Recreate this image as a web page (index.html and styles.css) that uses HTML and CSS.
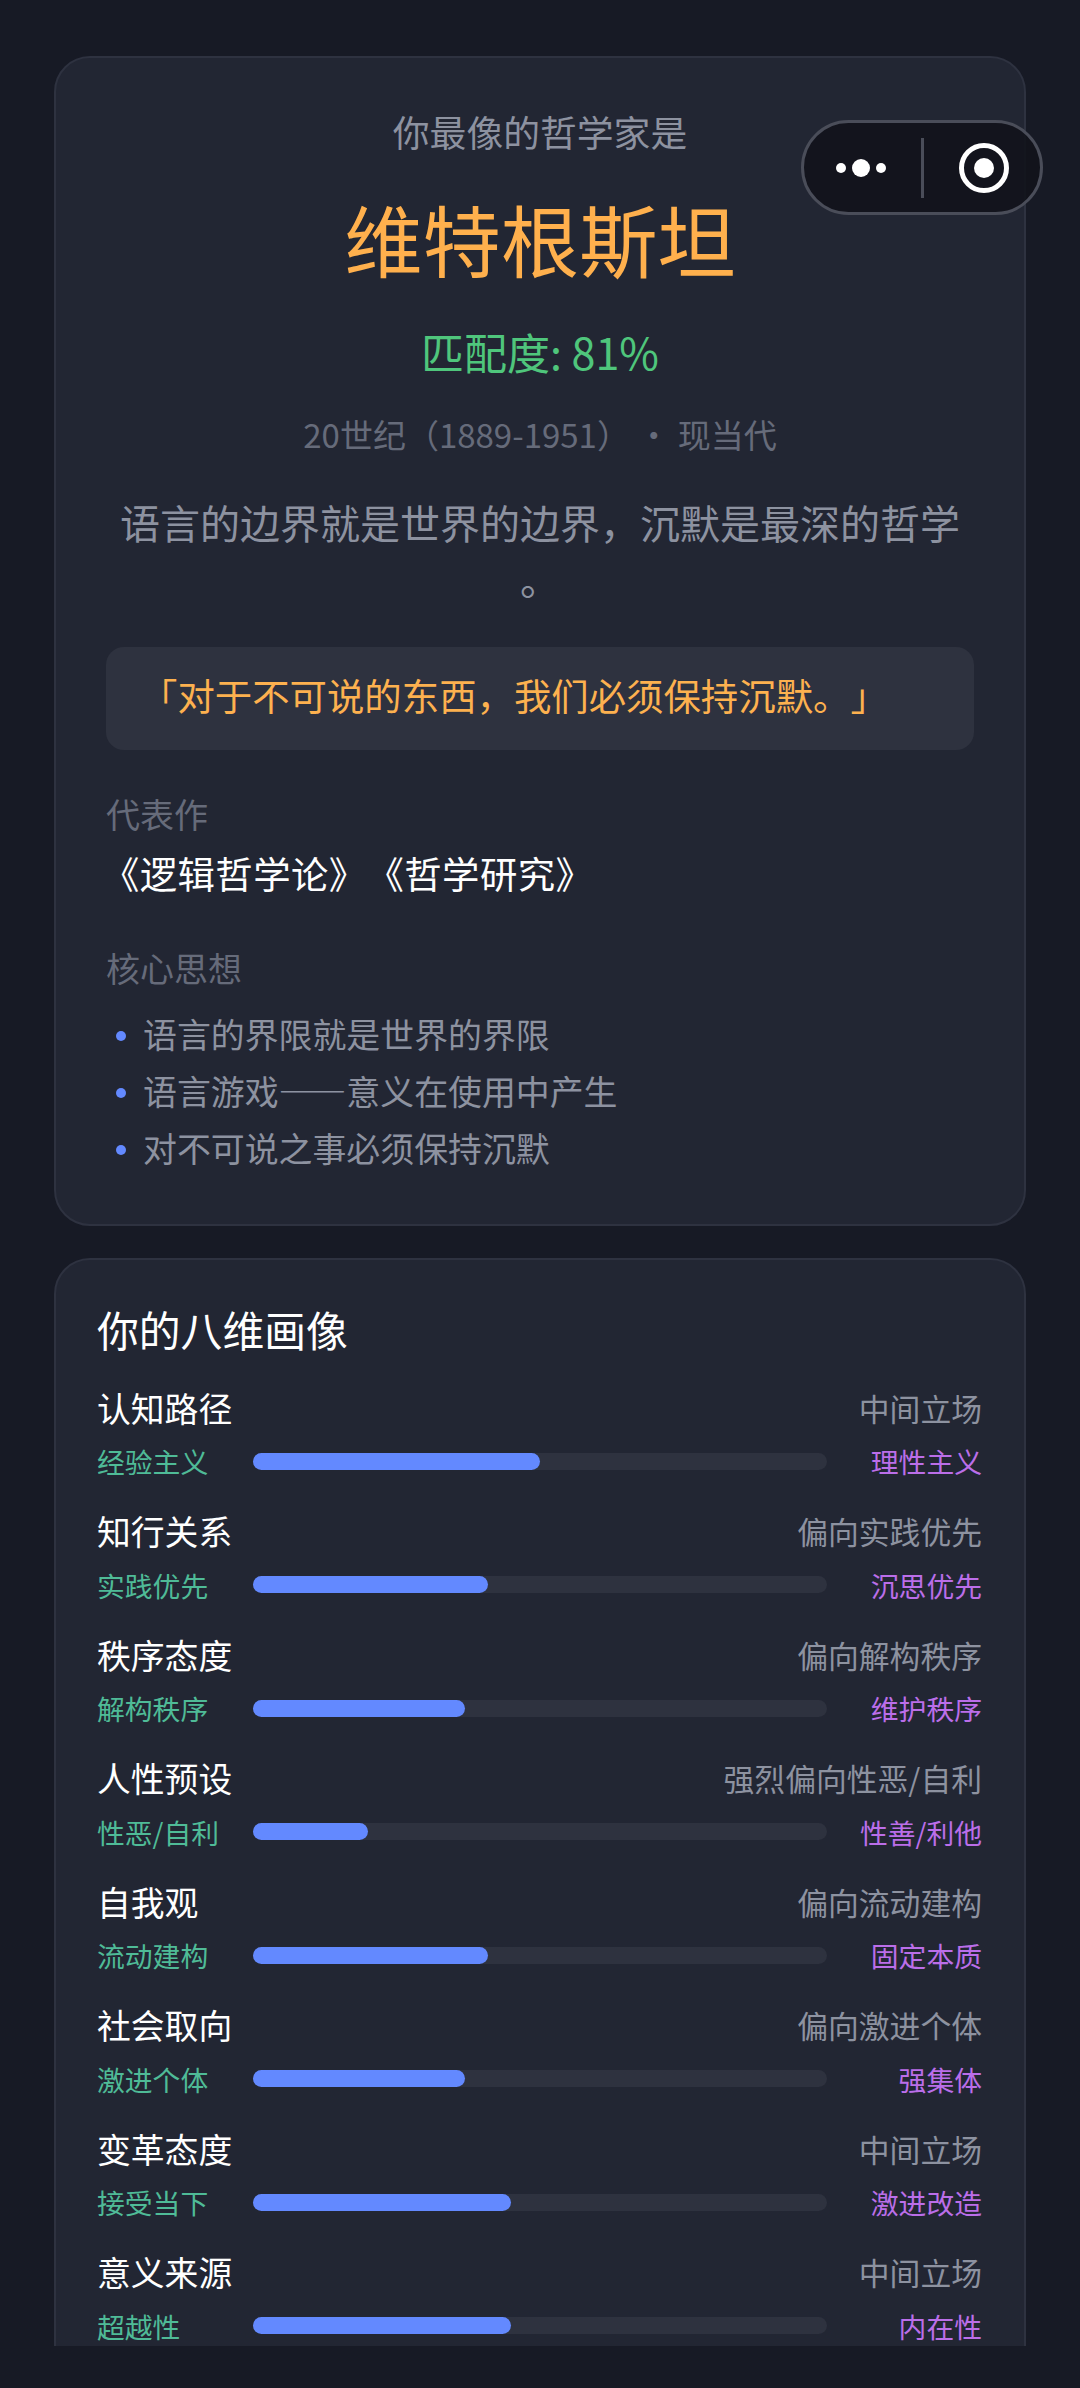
FILE: index.html
```html
<!DOCTYPE html>
<html lang="zh-CN">
<head>
    <meta charset="UTF-8">
    <title>哲学家测试结果</title>
    <link rel="stylesheet" href="styles.css">
</head>
<body>
    <div class="capsule">
        <svg class="capsule-more" width="60" height="20" viewBox="0 0 60 20">
            <circle cx="5" cy="10" r="5"/>
            <circle cx="25" cy="10" r="9"/>
            <circle cx="45" cy="10" r="5"/>
        </svg>
        <div class="capsule-line"></div>
        <svg class="capsule-close" width="50" height="50" viewBox="0 0 50 50">
            <circle class="ring" cx="25" cy="25" r="22.5"/>
            <circle cx="25" cy="25" r="10"/>
        </svg>
    </div>

    <div class="scroller">
        <div class="card hero">
            <div class="hero-sub">你最像的哲学家是</div>
            <div class="hero-name">维特根斯坦</div>
            <div class="hero-match">匹配度: 81%</div>
            <div class="hero-era">20世纪（1889-1951） · 现当代</div>
            <div class="hero-desc">语言的边界就是世界的边界，沉默是最深的哲学<br>。</div>
            <div class="quote">「对于不可说的东西，我们必须保持沉默。」</div>

            <div class="section-label">代表作</div>
            <div class="works">《逻辑哲学论》《哲学研究》</div>

            <div class="section-label ideas-label">核心思想</div>
            <ul class="ideas">
                <li>语言的界限就是世界的界限</li>
                <li>语言游戏——意义在使用中产生</li>
                <li>对不可说之事必须保持沉默</li>
            </ul>
        </div>

        <div class="card dims">
            <div class="dims-title">你的八维画像</div>

            <div class="dim">
                <div class="dim-head"><span class="dim-name">认知路径</span><span class="dim-value">中间立场</span></div>
                <div class="dim-bar">
                    <span class="dim-left">经验主义</span>
                    <div class="track"><div class="fill" style="width: 50%"></div></div>
                    <span class="dim-right">理性主义</span>
                </div>
            </div>
            <div class="dim">
                <div class="dim-head"><span class="dim-name">知行关系</span><span class="dim-value">偏向实践优先</span></div>
                <div class="dim-bar">
                    <span class="dim-left">实践优先</span>
                    <div class="track"><div class="fill" style="width: 41%"></div></div>
                    <span class="dim-right">沉思优先</span>
                </div>
            </div>
            <div class="dim">
                <div class="dim-head"><span class="dim-name">秩序态度</span><span class="dim-value">偏向解构秩序</span></div>
                <div class="dim-bar">
                    <span class="dim-left">解构秩序</span>
                    <div class="track"><div class="fill" style="width: 37%"></div></div>
                    <span class="dim-right">维护秩序</span>
                </div>
            </div>
            <div class="dim">
                <div class="dim-head"><span class="dim-name">人性预设</span><span class="dim-value">强烈偏向性恶/自利</span></div>
                <div class="dim-bar">
                    <span class="dim-left">性恶/自利</span>
                    <div class="track"><div class="fill" style="width: 20%"></div></div>
                    <span class="dim-right">性善/利他</span>
                </div>
            </div>
            <div class="dim">
                <div class="dim-head"><span class="dim-name">自我观</span><span class="dim-value">偏向流动建构</span></div>
                <div class="dim-bar">
                    <span class="dim-left">流动建构</span>
                    <div class="track"><div class="fill" style="width: 41%"></div></div>
                    <span class="dim-right">固定本质</span>
                </div>
            </div>
            <div class="dim">
                <div class="dim-head"><span class="dim-name">社会取向</span><span class="dim-value">偏向激进个体</span></div>
                <div class="dim-bar">
                    <span class="dim-left">激进个体</span>
                    <div class="track"><div class="fill" style="width: 37%"></div></div>
                    <span class="dim-right">强集体</span>
                </div>
            </div>
            <div class="dim">
                <div class="dim-head"><span class="dim-name">变革态度</span><span class="dim-value">中间立场</span></div>
                <div class="dim-bar">
                    <span class="dim-left">接受当下</span>
                    <div class="track"><div class="fill" style="width: 45%"></div></div>
                    <span class="dim-right">激进改造</span>
                </div>
            </div>
            <div class="dim">
                <div class="dim-head"><span class="dim-name">意义来源</span><span class="dim-value">中间立场</span></div>
                <div class="dim-bar">
                    <span class="dim-left">超越性</span>
                    <div class="track"><div class="fill" style="width: 45%"></div></div>
                    <span class="dim-right">内在性</span>
                </div>
            </div>
        </div>
    </div>
</body>
</html>
```

FILE: styles.css
```css
* {
    box-sizing: border-box;
}

html, body {
    margin: 0;
    padding: 0;
    height: 2388px;
    overflow: hidden;
}

body {
    position: relative;
    background-color: #171a25;
    font-family: "Noto Sans CJK SC", sans-serif;
    font-weight: 400;
    text-spacing-trim: space-all;
}

.scroller {
    height: 2346px;
    overflow: hidden;
    padding: 56px 54px 0;
}

.card {
    background-color: #222633;
    border: 2px solid #2e3240;
    border-radius: 36px;
}

.hero {
    height: 1170px;
    padding: 43px 50px 0;
    text-align: center;
    margin-bottom: 32px;
}

.hero-sub {
    font-size: 36.8px;
    line-height: 60px;
    color: #8d92a0;
}

.hero-name {
    font-size: 78.3px;
    line-height: 110px;
    margin-top: 22px;
    color: #ffb04d;
}

.hero-match {
    font-size: 43px;
    line-height: 64px;
    margin-top: 26px;
    color: #4fc67c;
}

.hero-era {
    font-size: 33px;
    line-height: 56px;
    margin-top: 23px;
    color: #666b7a;
}

.hero-desc {
    font-size: 40px;
    line-height: 56px;
    margin-top: 32px;
    color: #8d92a0;
}

.quote {
    height: 103px;
    margin-top: 41px;
    padding-left: 34px;
    border-radius: 18px;
    background-color: #2e323f;
    font-size: 37.4px;
    line-height: 97px;
    text-align: left;
    color: #fdb14f;
}

.section-label {
    font-size: 34px;
    line-height: 50px;
    margin-top: 39px;
    color: #666b7a;
    text-align: left;
}

.works {
    font-size: 37.4px;
    letter-spacing: 0.4px;
    line-height: 56px;
    margin: 6px 0 0 -4px;
    color: #fff;
    text-align: left;
}

.ideas-label {
    margin-top: 42px;
}

.ideas {
    list-style: none;
    margin: 12px 0 0;
    padding: 0;
    text-align: left;
}

.ideas li {
    position: relative;
    padding-left: 37px;
    font-size: 33.9px;
    line-height: 57px;
    color: #8d92a0;
}

.ideas li::before {
    content: "";
    position: absolute;
    left: 10px;
    top: 26px;
    width: 10px;
    height: 10px;
    border-radius: 50%;
    background-color: #6389ff;
}

.dims {
    height: 1200px;
    padding: 38px 41px 0;
}

.dims-title {
    font-size: 41.8px;
    line-height: 62px;
    color: #fff;
    margin-bottom: 21px;
}

.dim {
    height: 123.5px;
}

.dim-head {
    display: flex;
    justify-content: space-between;
    align-items: center;
    height: 52px;
    padding-right: 1px;
}

.dim-name {
    font-size: 33.8px;
    color: #fff;
}

.dim-value {
    font-size: 30.8px;
    color: #8d92a0;
}

.dim-bar {
    display: flex;
    align-items: center;
    height: 56px;
}

.dim-left, .dim-right {
    flex: none;
    width: 156px;
    font-size: 27.8px;
    line-height: 32px;
}

.dim-left {
    color: #4fbb97;
}

.dim-right {
    padding-right: 1px;
    text-align: right;
    color: #bb6ee9;
}

.track {
    flex: 1;
    height: 17px;
    border-radius: 9px;
    background-color: #2e323f;
}

.fill {
    height: 100%;
    border-radius: 9px;
    background-color: #6389ff;
}

.capsule {
    position: absolute;
    left: 801px;
    top: 120px;
    width: 242px;
    height: 95px;
    display: flex;
    align-items: center;
    border: 3px solid #4a4d59;
    border-radius: 48px;
    background-color: rgba(18, 19, 27, 0.9);
    z-index: 5;
}

.capsule-more {
    margin-left: 32px;
    fill: #fff;
}

.capsule-line {
    width: 3px;
    height: 60px;
    margin-left: 25px;
    background-color: #4a4d59;
}

.capsule-close {
    margin-left: 35px;
    fill: #fff;
}

.capsule-close .ring {
    fill: none;
    stroke: #fff;
    stroke-width: 5;
}
```
